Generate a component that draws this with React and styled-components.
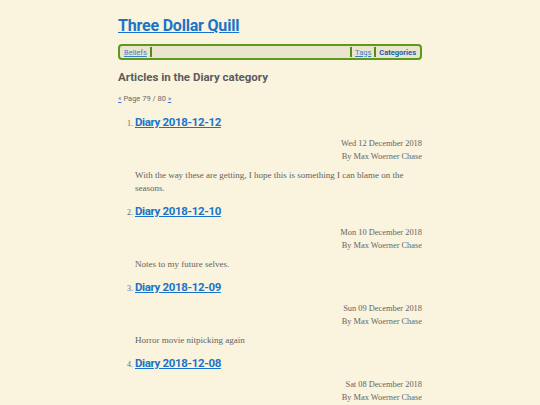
import React from "react";
import styled, { createGlobalStyle } from "styled-components";

const GlobalStyle = createGlobalStyle`
  html, body {
    margin: 0;
    padding: 0;
    background: #faf3dd;
  }
  body {
    font-family: "Liberation Serif", serif;
    color: #5f5f5f;
  }
`;

const Page = styled.div`
  width: 304px;
  margin: 0 auto;
  padding-top: 15px;
  box-sizing: border-box;
`;

const SiteTitle = styled.h1`
  margin: 0;
  font-family: Roboto, sans-serif;
  font-size: 16px;
  line-height: 22px;
  font-weight: 700;
  letter-spacing: -0.2px;
  & a {
    color: #1b73c9;
  }
`;

const Nav = styled.nav`
  margin-top: 7px;
  display: flex;
  align-items: center;
  height: 12px;
  padding: 0 2px;
  border: 2px solid #5b9a1d;
  border-radius: 4px;
  background: #ebe4cf;
  font-family: Roboto, sans-serif;
  font-size: 7.5px;
`;

const NavLink = styled.a`
  color: ${(p) => (p.current ? "#1b5fa6" : "#3f7fc0")};
  font-weight: ${(p) => (p.current ? 700 : 400)};
  text-decoration: ${(p) => (p.current ? "none" : "underline")};
  padding: 0 2px;
`;

const Bar = styled.span`
  width: 2px;
  height: 10px;
  background: #4f8f17;
  margin: 0 1px;
`;

const Spacer = styled.span`
  flex: 1;
`;

const Heading = styled.h2`
  margin: 9px 0 0;
  font-family: Roboto, sans-serif;
  font-size: 11.5px;
  line-height: 16px;
  font-weight: 700;
  color: #5c5c5c;
`;

const Pager = styled.p`
  margin: 9px 0 0;
  font-family: Roboto, sans-serif;
  font-size: 7.5px;
  line-height: 10px;
  color: #6a6a6a;
  & a {
    color: #3f7fc0;
  }
`;

const List = styled.ol`
  margin: 9px 0 0;
  padding-left: 17px;
`;

const Item = styled.li`
  margin-bottom: 7px;
  &::marker {
    font-family: "Liberation Serif", serif;
    font-size: 8px;
    color: #6a6a6a;
  }
`;

const ItemTitle = styled.h3`
  margin: 0;
  font-family: Roboto, sans-serif;
  font-size: 11.5px;
  line-height: 18px;
  font-weight: 700;
  letter-spacing: -0.35px;
  & a {
    color: #1b73c9;
  }
`;

const Meta = styled.div`
  margin-top: 6px;
  text-align: right;
  font-size: 8.4px;
  line-height: 13px;
  color: #666;
`;

const Summary = styled.p`
  margin: 6px 0 0;
  font-size: 9px;
  line-height: 13px;
  color: #636363;
`;

const articles = [
  {
    title: "Diary 2018-12-12",
    date: "Wed 12 December 2018",
    summary:
      "With the way these are getting, I hope this is something I can blame on the seasons.",
  },
  {
    title: "Diary 2018-12-10",
    date: "Mon 10 December 2018",
    summary: "Notes to my future selves.",
  },
  {
    title: "Diary 2018-12-09",
    date: "Sun 09 December 2018",
    summary: "Horror movie nitpicking again",
  },
  {
    title: "Diary 2018-12-08",
    date: "Sat 08 December 2018",
  },
];

const App = () => {
  return (
    <>
      <GlobalStyle />
      <Page>
        <SiteTitle>
          <a href="#">Three Dollar Quill</a>
        </SiteTitle>
        <Nav>
          <NavLink href="#">Beliefs</NavLink>
          <Bar />
          <Spacer />
          <Bar />
          <NavLink href="#">Tags</NavLink>
          <Bar />
          <NavLink href="#" current>
            Categories
          </NavLink>
        </Nav>
        <Heading>Articles in the Diary category</Heading>
        <Pager>
          <a href="#">«</a> Page 79 / 80 <a href="#">»</a>
        </Pager>
        <List>
          {articles.map((a) => (
            <Item key={a.title}>
              <ItemTitle>
                <a href="#">{a.title}</a>
              </ItemTitle>
              <Meta>
                {a.date}
                <br />
                By Max Woerner Chase
              </Meta>
              {a.summary && <Summary>{a.summary}</Summary>}
            </Item>
          ))}
        </List>
      </Page>
    </>
  );
};

export default App;
